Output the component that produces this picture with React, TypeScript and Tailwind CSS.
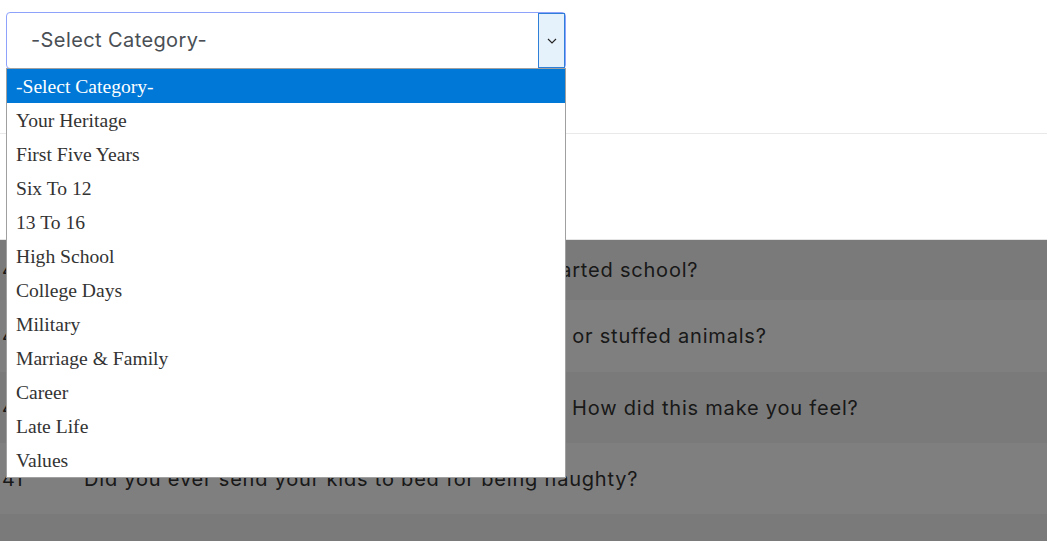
import React from 'react';

const categories = [
  '-Select Category-',
  'Your Heritage',
  'First Five Years',
  'Six To 12',
  '13 To 16',
  'High School',
  'College Days',
  'Military',
  'Marriage & Family',
  'Career',
  'Late Life',
  'Values'
];

const rows = [
  { no: '44', q: "What's the first thing you recalled when you started school?", h: 'h-[60px]' },
  { no: '43', q: 'What were your favourite childhood toys, dolls, or stuffed animals?', h: 'h-[72px]' },
  { no: '42', q: 'Were you ever spanked or punished as a child? How did this make you feel?', h: 'h-[71px]' },
  { no: '41', q: 'Did you ever send your kids to bed for being naughty?', h: 'h-[71px]' },
  { no: '40', q: '', h: 'h-[71px]' }
];

const App: React.FC = () => {
  return <div className="relative h-[541px] w-[1047px] overflow-hidden bg-white font-['Inter',sans-serif]">
      {/* filter bar */}
      <div className="h-[134px] border-b border-[#e9e9e9] pt-[12px] pl-[6px]">
        <div className="flex h-[57px] w-[560px] items-stretch rounded-[4px] border border-[#8fa2fb] bg-white">
          <div className="flex flex-1 items-center pb-[1px] pl-[24px] text-[20px] tracking-[0.4px] text-[#4a4f55]">
            -Select Category-
          </div>
          <div className="flex w-[27px] items-center justify-center border border-[#2f7fd9] bg-[#e5f1fb]">
            <svg width="10" height="6" viewBox="0 0 10 6" fill="none">
              <path d="M1 1l4 4 4-4" stroke="#222" strokeWidth="1.1" />
            </svg>
          </div>
        </div>
      </div>

      <div className="h-[105px]" />

      {/* question table */}
      <div className="border-t border-[#e5e5e5]">
        {rows.map((r, i) => <div key={r.no} className={`flex items-center text-[20px] text-[#333] ${r.h} ${i % 2 === 0 ? 'bg-[#f5f5f5]' : 'bg-white'}`}>
            <span className="w-[84px] shrink-0 pl-[2px]">{r.no}</span>
            <span className="tracking-[0.8px]">{r.q}</span>
          </div>)}
      </div>

      {/* backdrop */}
      <div className="absolute inset-x-0 top-[240px] bottom-0 bg-black/50" />

      {/* open option list */}
      <ul className="absolute left-[6px] top-[68px] w-[560px] border border-[#a0a0a0] bg-white font-['Liberation_Serif',serif] text-[19.6px] text-[#333]">
        {categories.map((c, i) => <li key={c} className={`flex h-[34px] items-center pt-[2px] pl-[9px] ${i === 0 ? 'bg-[#0078d7] text-white' : ''}`}>
            {c}
          </li>)}
      </ul>
    </div>;
};

export default App;
